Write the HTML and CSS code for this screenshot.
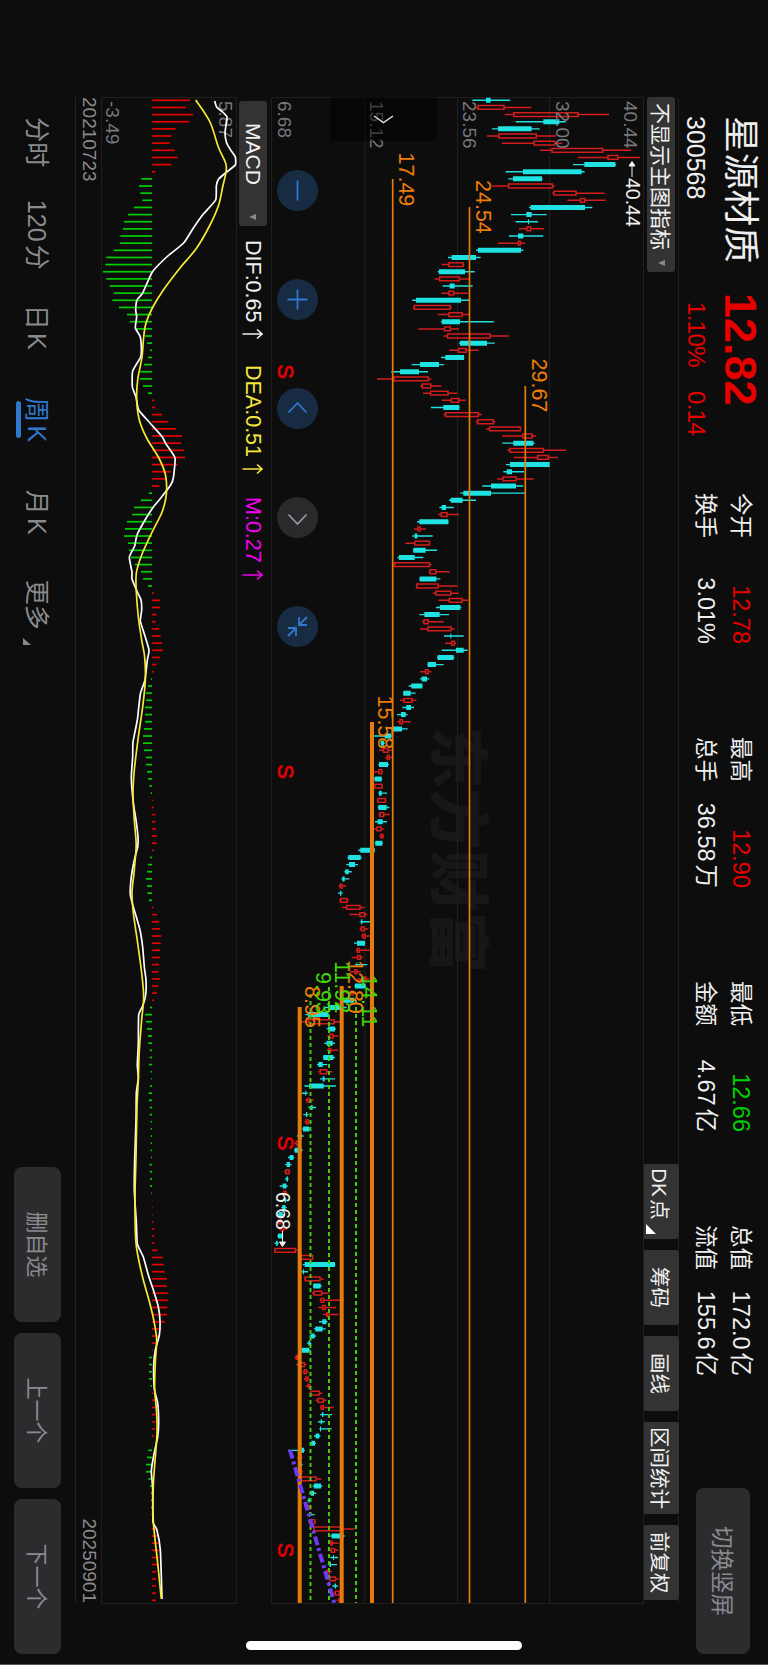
FILE: index.html
```html
<!DOCTYPE html>
<html lang="zh-CN">
<head>
  <meta charset="UTF-8">
  <title>星源材质 300568</title>
  <link rel="stylesheet" href="styles.css">
</head>
<body>

<div class="screen">

  <header class="quote">
    <div class="name">
      <h1>星源材质</h1>
      <span class="code">300568</span>
    </div>
    <div class="price">
      <b>12.82</b>
      <div class="change"><span>1.10%</span><span>0.14</span></div>
    </div>
    <div class="stats">
      <dl>
        <dt>今开</dt><dd class="up">12.78</dd>
        <dt>换手</dt><dd>3.01%</dd>
      </dl>
      <dl>
        <dt>最高</dt><dd class="up">12.90</dd>
        <dt>总手</dt><dd>36.58万</dd>
      </dl>
      <dl>
        <dt>最低</dt><dd class="down">12.66</dd>
        <dt>金额</dt><dd>4.67亿</dd>
      </dl>
      <dl>
        <dt>总值</dt><dd>172.0亿</dd>
        <dt>流值</dt><dd>155.6亿</dd>
      </dl>
    </div>
    <button class="big-btn switch">切换竖屏</button>
  </header>

  <div class="toolbar">
    <button class="select">不显示主图指标 <i class="caret"></i></button>
    <div class="tools">
      <button class="dk">DK点<i class="corner"></i></button>
      <button>筹码</button>
      <button>画线</button>
      <button class="wide">区间统计</button>
      <button>前复权</button>
    </div>
  </div>

  <div class="pane price-pane">
    <svg width="1507" height="373" viewBox="97 124 1507 373">
      <text class="watermark" x="727" y="332">东方财富</text>
      <path class="grid" d="M97 124.5H1603.5V496.5H97.5V124.5M97 218.5H1603M97 310.5H1603M97 403H1603"/>
      <g id="candles"></g>

      <g class="scale">
        <text x="101" y="144">40.44</text>
        <text x="101" y="212">32.00</text>
        <text x="101" y="305">23.56</text>
        <text x="101" y="398">15.12</text>
        <text x="101" y="490.500">6.68</text>
      </g>

      <g class="level">
        <path d="M179 375.300H1603M207 298.500H1603M386 242.700H1603"/>
        <path class="thick" d="M722 396H1603M986 426.300H1603M1007 468.300H1603"/>
      </g>
      <path class="target" d="M1000 412H1603M987 439H1603M994 457.500H1603"/>
      <g class="level-text">
        <text x="152.500" y="369.500">17.49</text>
        <text x="180" y="292.500">24.54</text>
        <text x="358.500" y="236.500">29.67</text>
        <text x="695.500" y="390.500">15.58</text>
        <text x="960" y="420">12.80</text>
        <text x="986" y="463">8.95</text>
      </g>
      <g class="target-text">
        <text x="975" y="406.500">14.11</text>
        <text x="961" y="433">11.92</text>
        <text x="972" y="452">9.93</text>
      </g>

      <path class="trend" d="M1450 478L1603 433.700"/>

      <g class="mark">
        <path d="M163 136H177M161.500 136L166 133V139ZM1231 485.500H1243M1246.500 485.500L1242 482.500V488.500Z"/>
        <text x="178" y="142">40.44</text>
        <text x="1192" y="492">6.68</text>
      </g>

      <g class="sell">
        <text x="371.500" y="490">S</text>
        <text x="771.500" y="490">S</text>
        <text x="1143" y="490">S</text>
        <text x="1550" y="490">S</text>
      </g>

      <rect class="drawer" x="97" y="331" width="44" height="107" rx="3"/>
      <path class="drawer-arrow" d="M116 394L122.500 384.500L116 375"/>
    </svg>

    <div class="controls">
      <button><svg width="41" height="41"><path d="M10.500 20.500H30.500"/></svg></button>
      <button><svg width="41" height="41"><path d="M10.500 20.500H30.500M20.500 10.500V30.500"/></svg></button>
      <button><svg width="41" height="41"><path d="M24.500 11.500L15 20.500L24.500 29.500"/></svg></button>
      <button class="off"><svg width="41" height="41"><path d="M17.500 11.500L27 20.500L17.500 29.500"/></svg></button>
      <button><svg width="41" height="41"><path d="M11 11L19 19M19 11V19H11M30 30L22 22M22 30V22H30"/></svg></button>
    </div>
  </div>

  <div class="macd-bar">
    <button class="select">MACD <i class="caret"></i></button>
    <span class="dif">DIF:0.65<svg width="14" height="21"><path d="M7 20.500V1M2.500 6L7 1L11.500 6"/></svg></span>
    <span class="dea">DEA:0.51<svg width="14" height="21"><path d="M7 20.500V1M2.500 6L7 1L11.500 6"/></svg></span>
    <span class="m">M:0.27<svg width="14" height="21"><path d="M7 20.500V1M2.500 6L7 1L11.500 6"/></svg></span>
  </div>

  <div class="pane macd-pane">
    <svg width="1507" height="136" viewBox="97 531 1507 136">
      <path class="grid" d="M97 531.500H1603.500V666.500H97.500V531.500"/>
      <g class="scale">
        <text x="101" y="549.500">5.87</text>
        <text x="101" y="662">-3.49</text>
      </g>
      <g id="bars"></g>
      <path id="dif"/>
      <path id="dea"/>
    </svg>
  </div>

  <div class="dates"><span>20210723</span><span>20250901</span></div>

  <footer class="bottom">
    <nav>
      <a>分时</a>
      <a>120分</a>
      <a>日K</a>
      <a class="active">周K</a>
      <a>月K</a>
      <a>更多<i class="corner"></i></a>
    </nav>
    <div class="actions">
      <button class="big-btn">删自选</button>
      <button class="big-btn">上一个</button>
      <button class="big-btn">下一个</button>
    </div>
  </footer>

  <div class="home"></div>
</div>

<script src="chart.js"></script>
</body>
</html>
```
FILE: styles.css
```css
* {
  box-sizing: border-box;
}

html {
  overflow: hidden;
  background: #0d0d0d;
}

body {
  margin: 0;
  width: 768px;
  height: 1665px;
  overflow: hidden;
  background: #0d0d0d;
}

/* landscape layout turned a quarter clockwise */
.screen {
  position: relative;
  display: flex;
  flex-direction: column;
  width: 1665px;
  height: 768px;
  transform: translateX(768px) rotate(90deg);
  transform-origin: 0 0;
  border-right: 1px solid #555;
  background: #0d0d0d;
  color: #f0f0f0;
  font-family: "Liberation Sans", "Noto Sans CJK SC", sans-serif;
  text-autospace: normal;
}

button {
  border: none;
  margin: 0;
  padding: 0;
  font-family: inherit;
  color: #f0f0f0;
  background: #333;
}

/* header */
.quote {
  display: flex;
  height: 89px;
  padding: 0 10px 0 116px;
}

.name {
  width: 179px;
}

h1 {
  margin: 9px 0 0;
  font-size: 36.8px;
  line-height: 38px;
  font-weight: 400;
  color: #eee;
}

.code {
  display: block;
  margin-top: 11px;
  font-size: 25px;
  line-height: 28px;
}

.price {
  width: 198px;
  color: #e60000;
}

.price b {
  display: block;
  margin: 8px 0 0 -2px;
  font-size: 45px;
  line-height: 40px;
}

.change {
  display: flex;
  gap: 29px;
  margin: 10px 0 0 7px;
  font-size: 24px;
  line-height: 28px;
  letter-spacing: -.6px;
}

.change span {
  width: 60px;
}

.stats {
  display: flex;
  gap: 93px;
  flex: 1;
}

dl {
  display: grid;
  grid-template-columns: auto auto;
  justify-content: space-between;
  grid-auto-rows: 35px;
  width: 151px;
  margin: 10px 0 0;
  font-size: 22.5px;
  line-height: 35px;
  white-space: nowrap;
}

dd {
  margin: 0;
  font-size: 23.5px;
  text-align: right;
}

.up {
  color: #e60000;
}

.down {
  color: #00d400;
}

.big-btn {
  width: 155px;
  height: 47px;
  padding-bottom: 3px;
  border-radius: 8px;
  background: #2c2c2e;
  color: #8a8a90;
  font-size: 22px;
}

.big-btn.switch {
  width: 166px;
  height: 54px;
  margin-top: 18px;
  font-size: 22.500px;
}

/* toolbar above the candles */
.toolbar {
  display: flex;
  justify-content: space-between;
  align-items: center;
  height: 35px;
  margin: 0 61px 0 97px;
  border-top: 1px solid #1e1e1e;
}

.select {
  display: flex;
  align-items: center;
  justify-content: space-between;
  width: 175px;
  height: 28px;
  padding: 0 6px 2px;
  border-radius: 3px;
  font-size: 21px;
  white-space: nowrap;
}

.caret {
  border: 3.5px solid transparent;
  border-top: 7px solid #8a8a8e;
  border-bottom: none;
}

.tools {
  display: flex;
  gap: 11px;
  margin-right: 3px;
}

.tools button {
  position: relative;
  width: 75px;
  height: 36px;
  border-radius: 3px;
  font-size: 20.5px;
  white-space: nowrap;
}

.tools .dk {
  padding-right: 15px;
}

.tools .wide {
  width: 92px;
}

.corner {
  position: absolute;
  right: 5px;
  bottom: 3px;
  border-left: 10px solid transparent;
  border-bottom: 10px solid #fff;
}

/* charts */
.pane {
  position: relative;
  margin-left: 97px;
}

.pane svg {
  display: block;
}

.price-pane {
  height: 373px;
}

.grid {
  fill: none;
  stroke: #1f1f1f;
  stroke-width: 1.2;
}

.scale {
  fill: #77777c;
  font-size: 19px;
}

.watermark {
  fill: #171717;
  font-family: "Noto Sans CJK SC", sans-serif;
  font-size: 61.5px;
  font-weight: 900;
}

.rise {
  fill: none;
  stroke: #d41c1c;
  stroke-width: 1.5;
}

.fall {
  fill: #20e2e2;
}

.level {
  fill: none;
  stroke: #e67a0c;
  stroke-width: 1.700;
}

.level .thick {
  stroke-width: 4;
}

.level-text {
  fill: #ee7d08;
  font-size: 21.5px;
}

.target {
  stroke: #42cc08;
  stroke-width: 2;
  stroke-dasharray: 4 3;
}

.target-text {
  fill: #42d808;
  font-size: 21.5px;
}

.trend {
  stroke: #6c3af2;
  stroke-width: 4;
  stroke-dasharray: 9 3 3 3;
}

.mark {
  fill: #f0f0f0;
  font-size: 19.5px;
}

.mark path {
  stroke: #f0f0f0;
}

.sell {
  fill: #e60000;
  stroke: #e60000;
  stroke-width: .6;
  font-size: 22px;
  text-anchor: middle;
}

.drawer {
  fill: #000;
  fill-opacity: .5;
}

.drawer-arrow {
  fill: none;
  stroke: #ddd;
  stroke-width: 1.5;
}

.controls {
  position: absolute;
  left: 73px;
  top: 326px;
  display: flex;
  gap: 68px;
}

.controls button {
  width: 41px;
  height: 41px;
  border-radius: 50%;
  background: #172b42;
}

.controls path {
  fill: none;
  stroke: #2f78cc;
  stroke-width: 1.8;
}

.controls .off {
  background: #2a2a2c;
}

.controls .off path {
  stroke: #97979c;
}

/* macd */
.macd-bar {
  display: flex;
  align-items: center;
  height: 34px;
  padding: 2px 0 0 101px;
  font-size: 21.5px;
}

.macd-bar .select {
  width: 125px;
  padding: 0 6px 0 22px;
  margin-right: 14px;
}

.macd-bar span {
  display: flex;
  align-items: center;
  gap: 5px;
}

.macd-bar span path {
  fill: none;
  stroke: currentColor;
  stroke-width: 1.6;
}

.macd-bar .dif {
  width: 125px;
}

.macd-bar .dea {
  width: 132px;
  color: #f4e53c;
}

.macd-bar .m {
  color: #f000f0;
}

.macd-pane {
  height: 136px;
}

.bar-up {
  fill: #e60000;
}

.bar-down {
  fill: #00cc00;
}

#dif,
#dea {
  fill: none;
  stroke: #fff;
  stroke-width: 1.7;
  stroke-linejoin: round;
}

#dea {
  stroke: #f7e834;
}

.dates {
  display: flex;
  justify-content: space-between;
  height: 26px;
  margin: 0 61px 0 97px;
  border-bottom: 1px solid #222;
  color: #8a8a8e;
  font-size: 19px;
  line-height: 24px;
}

/* periods and actions */
.bottom {
  display: flex;
  justify-content: space-between;
  align-items: center;
  height: 75px;
  padding: 0 10px 0 96px;
  color: #8a8a8e;
}

nav {
  display: grid;
  grid-template-columns: repeat(6, 92.5px);
  justify-items: center;
  font-size: 25px;
  line-height: 40px;
}

nav a {
  position: relative;
  white-space: nowrap;
}

nav .active {
  color: #2f78cc;
}

nav .active::after {
  content: "";
  position: absolute;
  left: 4px;
  right: 4px;
  bottom: -1px;
  height: 5px;
  border-radius: 3px;
  background: #2f78cc;
}

nav .corner {
  right: -15px;
  bottom: 6px;
  border-left-width: 7px;
  border-bottom: 8px solid #8a8a8e;
}

.actions {
  display: flex;
  gap: 11px;
}

.home {
  position: absolute;
  right: 14px;
  top: 246px;
  width: 9px;
  height: 276px;
  border-radius: 5px;
  background: #fff;
}
```
FILE: chart.js
```js
// All values are in thirds of a pixel, counted up from the bottom edge of the screen.
const BOTTOM = 768;
const START = 100.3;
const STEP = 7.143;

const xAt = i => START + i * STEP;

// direction (r = rise, c = fall), low, body bottom, body top, high
const early = `c 265 306 320 378,r 272 280 362 442,r 362 388 584 675,c 395 478 526 545,c 324 342 443 467,r 309 343 459 516,
r 354 448 514 535,r 468 502 658 742,r 582 670 703 768,c 567 601 694 696,c 365 417 593 602,c 373 387 474 476,
r 325 372 507 513,r 505 508 578 662,r 550 588 604 665,c 435 440 603 625,c 381 427 443 488,c 395 432 435 462,
r 405 427 442 481,c 375 402 418 478,r 342 401 411 424,c 276 282 411 418,c 192 203 276 290,r 173 193 239 241,
c 161 165 243 272,r 152 165 228 257,c 176 197 212 266,r 172 193 211 251,c 85 96 231 257,r 87 89 201 203,
r 161 193 236 257,c 171 174 228 329,r 103 180 201 225,r 179 189 320 374,c 225 228 309 332,r 196 222 248 284,
c 171 184 240 241,c 83 108 165 180,c 22 48 105 132,r -21 28 135 142,r 109 113 142 172,r 117 138 194 220,
r 174 200 227 245,c 141 178 226 227,r 178 183 285 294,r 275 279 330 334,r 307 315 411 411,r 354 415 446 456,
c 355 388 448 452,r 370 376 480 546,r 390 459 494 522,c 366 378 497 497,c 358 368 384 420,r 339 355 398 449,
c 295 321 396 418,c 229 238 321 425,c 195 200 236 276,c 166 173 186 209,r 163 170 191 225,c 99 106 193 194,
r 90 100 110 126,c 85 92 100 146,r 64 91 138 138,c 87 88 125 159,c 40 45 92 118,r 28 30 138 143,
r 134 136 157 198,c 106 107 157 169,r 95 97 164 221,r 147 154 202 224,r 163 194 236 252,c 156 168 229 232,
c 106 121 167 195,r 115 118 134 179,r 108 130 203 212,c 180 199 202 239,r 183 201 213 216,c 173 216 239 251,
c 159 161 209 211,c 130 131 156 179,r 108 123 134 142,c 108 113 129 136,c 74 82 115 116,c 57 58 80 95,
r 48 58 86 97,c 55 67 81 90,c 39 51 65 71,r 39 46 57 80,c 20 25 54 71`;

const late = `c 402 434 454 459,c 421 423 432 436,r 417 429 446 457,r 436 440 450 459,c 415 417 444 447,r 401 415 427 429,
c 401 404 425 427,r 402 403 428 429,c 415 417 425 441,r 410 412 438 440,c 413 415 440 448,r 415 418 433 449,
c 405 413 428 441,r 402 409 425 433,r 418 421 430 432,c 404 406 427 429,c 355 361 404 405,c 322 325 362 365,
c 319 327 345 354,c 313 316 326 335,c 304 307 314 328,r 296 299 308 319,c 294 300 304 308,r 297 300 323 326,
r 307 318 362 374,r 328 358 376 382,c 361 363 367 392,r 359 362 374 385,r 363 367 377 389,c 342 351 375 376,
r 347 350 359 392,r 335 351 363 369,c 345 350 352 382,r 330 343 352 362,r 352 372 380 388,c 343 345 377 378,
r 318 330 341 346,c 305 308 342 344,c 255 264 300 320,c 196 204 265 268,r 174 205 284 303,c 260 264 285 288,
r 262 268 281 295,c 253 260 278 285,r 261 264 274 294,c 249 250 280 285,c 231 235 248 262,r 235 239 262 277,
c 240 248 254 285,c 193 207 251 288,c 184 196 199 203,r 196 200 210 221,c 205 213 218 228,c 190 198 202 206,
r 193 197 206 213,c 187 189 208 213,c 171 176 186 191,r 163 167 180 183,c 162 164 185 188,c 144 149 160 163,
c 136 140 150 155,r 132 136 149 151,c 135 139 144 146,c 119 128 139 143,r 126 130 140 142,c 130 134 138 142,
c 124 127 136 140,c 112 116 128 135,r 110 115 124 128,r 117 122 132 142,c 112 114 126 130,c 104 108 113 116,
r 102 103 168 172,r 182 182 220 221,c 188 194 285 286,c 184 189 192 204,r 192 194 242 251,c 219 220 242 245,
r 216 220 247 267,r 239 242 253 312,r 235 246 257 288,r 249 259 265 296,c 237 247 259 262,c 222 226 248 257,
c 208 213 224 228,c 202 205 210 214,c 184 185 208 212,r 163 169 174 182,r 168 174 195 200,r 188 191 201 206,
r 192 196 205 209,r 197 203 211 214,r 208 211 240 247,r 226 232 252 260,r 240 242 252 281,c 240 246 250 276,
c 234 242 246 254,c 238 240 243 275,c 222 227 238 241,c 212 214 225 228,c 144 183 192 195,r 172 176 185 188,
c 178 183 185 188,r 178 183 186 189,r 180 182 230 244,c 218 222 243 247,c 208 213 222 229,c 202 205 209 212,
r 200 204 212 215,c 203 207 210 224,r 204 207 226 229,r 219 220 310 344,c 271 275 310 314,r 268 271 279 296,
r 263 272 286 295,c 271 279 282 294,c 263 268 273 291,r 258 260 270 275,r 264 268 288 297,c 277 284 288 294,
r 280 284 299 304,r 290 296 308 308`;

const parse = (text, base) => text.split(',').map(row => {
  const [dir, ...v] = row.trim().split(' ');
  return { dir, v: v.map(n => BOTTOM - base - n / 3) };
});

const candles = [...parse(early, 384), ...parse(late, 240)];

document.getElementById('candles').innerHTML = candles.map(({ dir, v }, i) => {
  const [low, bottom, top, high] = v;
  const x = xAt(i);
  if (dir === 'r') {
    const h = Math.max(bottom - top - 1.2, 1);
    return `<path class="rise" d="M${x} ${high}V${top}M${x} ${bottom}V${low}M${x - 1.9} ${top + 0.6}h3.8v${h}h-3.8z"/>`;
  }
  return `<path class="fall" d="M${x - 0.7} ${high}h1.4V${low}h-1.4zM${x - 2.5} ${top}h5V${bottom}h-5z"/>`;
}).join('');

// MACD histogram
const ZERO = 456;
const bars = [
  570, 557, 579, 567, 527, 514, 509, 524, 533, 514, 466, 424, 417, 421, 427, 402, 384, 372, 369, 361,
  360, 341, 319, 316, 309, 319, 329, 342, 337, 357, 381, 390, 408, 435, 441, 450, 444, 432, 421, 420,
  429, 444, 463, 466, 486, 505, 528, 546, 543, 552, 555, 533, 512, 497, 478, 447, 423, 402, 396, 381,
  375, 372, 384, 387, 392, 405, 423, 429, 444, 462, 480, 480, 470, 467, 477, 482, 486, 489, 480, 469,
  462, 453, 444, 438, 438, 435, 435, 435, 432, 429, 429, 432, 438, 438, 441, 444, 448, 452, 459, 462,
  466, 466, 468, 471, 470, 462, 450, 444, 441, 438, 441, 442, 447, 461, 471, 477, 480, 484, 482, 480,
  480, 477, 475, 480, 474, 471, 462, 450, 435, 438, 441, 444, 445, 449, 449, 447, 452, 454, 450, 446,
  447, 449, 449, 452, 452, 452, 452, 452, 453, 448, 449, 450, 450, 454, 457, 458, 458, 461, 463, 463,
  463, 472, 488, 492, 494, 501, 501, 504, 504, 502, 501, 495, 484, 476, 468, 458, 447, 447, 447, 447,
  452, 460, 463, 466, 466, 466, 465, 462, 457, 445, 441, 438, 438, 445, 450, 453, 453, 453, 455, 461,
  469, 474, 476, 478, 477, 476, 468, 468, 468, 468, 468
];

document.getElementById('bars').innerHTML = bars.map((v, i) => {
  const top = BOTTOM - Math.max(v, ZERO) / 3;
  const cls = v > ZERO ? 'bar-up' : 'bar-down';
  return `<rect class="${cls}" x="${xAt(i) - 0.85}" y="${top}" width="1.7" height="${Math.abs(v - ZERO) / 3}"/>`;
}).join('');

const dif = [
  [101,644],[107,650],[112,668],[117,681],[123,679],[133,675],[143,680],[150,692],[157,706],[165,706],
  [172,680],[179,656],[186,649],[200,647],[214,610],[228,580],[243,551],[257,500],[272,457],[293,428],
  [300,411],[310,407],[317,410],[328,406],[336,420],[347,424],[357,422],[371,398],[387,397],[397,408],
  [410,416],[423,450],[437,487],[444,498],[458,525],[478,520],[485,512],[499,480],[507,460],[520,435],
  [535,411],[546,404],[557,388],[572,396],[579,396],[592,412],[600,423],[610,425],[621,421],[633,432],
  [650,447],[660,442],[680,435],[694,421],[720,412],[742,399],[757,398],[778,394],[803,400],[820,408],
  [837,414],[847,413],[857,405],[870,397],[883,392],[895,391],[907,400],[930,420],[947,428],[967,433],
  [980,438],[995,437],[1006,428],[1015,416],[1043,415],[1065,412],[1078,415],[1093,409],[1120,408],
  [1160,404],[1191,403],[1222,409],[1244,412],[1257,430],[1275,445],[1292,462],[1307,475],[1321,480],
  [1335,478],[1350,466],[1365,461],[1389,463],[1403,473],[1423,476],[1437,473],[1454,462],[1471,454],
  [1488,458],[1522,459],[1529,470],[1550,481],[1599,486]
];

const dea = [
  [100,587],[122,630],[147,655],[163,677],[172,678],[187,668],[205,656],[225,630],[248,590],[268,540],
  [290,490],[308,457],[323,438],[337,431],[357,426],[380,413],[400,410],[420,418],[438,440],[457,475],
  [473,495],[487,500],[499,497],[513,485],[533,455],[555,425],[573,409],[592,409],[617,415],[640,425],
  [657,434],[680,436],[707,428],[737,415],[770,403],[793,399],[820,403],[840,408],[850,408],[873,402],
  [893,396],[913,400],[943,413],[973,425],[997,431],[1020,425],[1050,418],[1080,415],[1107,411],
  [1157,408],[1198,405],[1239,407],[1258,415],[1280,430],[1304,450],[1323,463],[1340,470],[1362,466],
  [1389,464],[1413,470],[1434,471],[1461,465],[1485,460],[1515,459],[1536,464],[1560,472],[1599,484]
];

// Catmull-Rom through the points, k = 0 gives straight segments
const line = (points, k) => {
  const p = points.map(([x, v]) => [x, BOTTOM - v / 3]);
  let d = `M${p[0]}`;
  for (let i = 0; i < p.length - 1; i++) {
    const a = p[i - 1] || p[i], b = p[i], c = p[i + 1], e = p[i + 2] || c;
    d += `C${b[0] + (c[0] - a[0]) * k} ${b[1] + (c[1] - a[1]) * k} ${c[0] - (e[0] - b[0]) * k} ${c[1] - (e[1] - b[1]) * k} ${c}`;
  }
  return d;
};

document.getElementById('dif').setAttribute('d', line(dif, 0.08));
document.getElementById('dea').setAttribute('d', line(dea, 0.16));
```
